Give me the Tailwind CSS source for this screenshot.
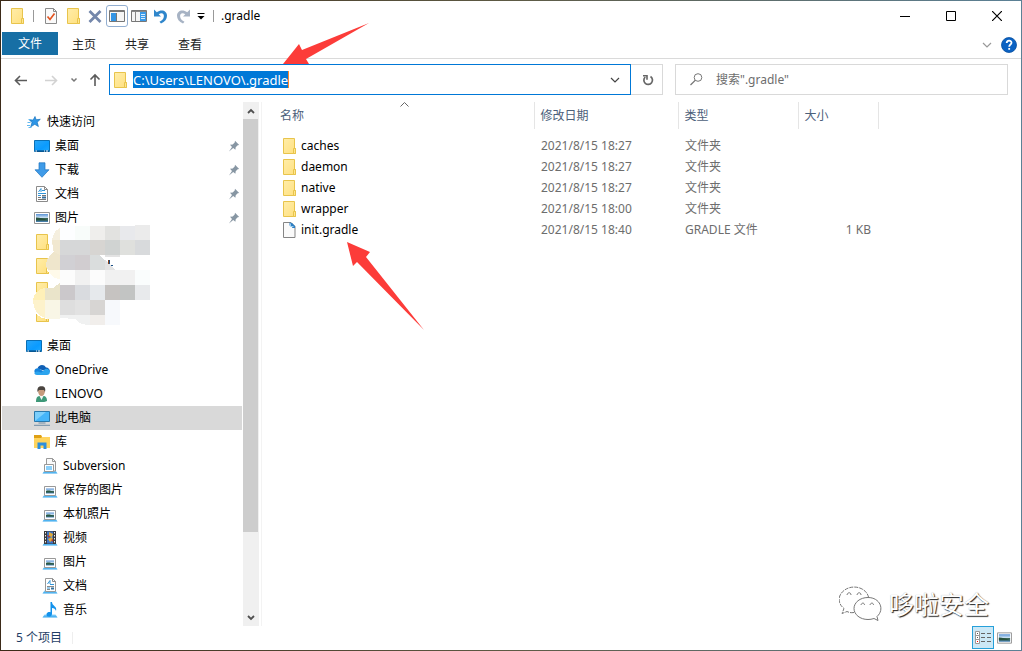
<!DOCTYPE html>
<html lang="zh-CN">
<head>
<meta charset="utf-8">
<meta name="viewport" content="width=device-width, initial-scale=1">
<title>.gradle</title>
<script src="https://cdn.jsdelivr.net/npm/@tailwindcss/browser@4"></script>
</head>
<body class="h-screen overflow-hidden bg-linear-to-r from-[#3b2a18] via-[#5d5a44] to-[#5b8196] p-px font-['Noto_Sans','Noto_Sans_CJK_SC',sans-serif] text-[12px] leading-[16px] text-black">
<svg class="absolute size-0" aria-hidden="true">
  <defs>
    <linearGradient id="gFolder" x1="0" y1="0" x2="1" y2="1"><stop offset="0" stop-color="#ffeda9"/><stop offset="1" stop-color="#ffe07f"/></linearGradient>
    <linearGradient id="gBlue" x1="0" y1="0" x2="1" y2="1"><stop offset="0" stop-color="#2aa6f8"/><stop offset=".6" stop-color="#0a9bff"/><stop offset="1" stop-color="#1ea8ff"/></linearGradient>
    <linearGradient id="gPhoto" x1="0" y1="0" x2="0" y2="1"><stop offset="0" stop-color="#5a93d6"/><stop offset=".5" stop-color="#d6e9f5"/><stop offset=".55" stop-color="#3c6653"/><stop offset="1" stop-color="#4a83b8"/></linearGradient>
    <linearGradient id="gStand" x1="0" y1="0" x2="0" y2="1"><stop offset="0" stop-color="#8fd3fb"/><stop offset="1" stop-color="#2fa4ec"/></linearGradient>
    <symbol id="folder" viewBox="0 0 16 16"><path d="M2.500.5h11v10h1v5h-12z" fill="url(#gFolder)" stroke="#e8c44c"/><path d="M12.500 15v-4.500h2v5h-2z" fill="#ffe68f" stroke="#e8c44c"/></symbol>
    <symbol id="star" viewBox="0 0 16 16"><path d="M9 2.500l1.100 3.200 4.200-.4-3.100 2.900 1.200 4.300-3.600-2.200-4.100 2.500 1.300-4.300-2.400-2.500 3.600 0z" fill="#2e95e6" stroke="#1673bd" stroke-width=".7"/><path d="M2.500 5.500h3M1.500 8.500h3M1 11.500h3M2.500 13.500h3" stroke="#62b8ef"/></symbol>
    <symbol id="desktop" viewBox="0 0 16 16"><path d="M.5 2.500h15v11H.5z" fill="url(#gBlue)" stroke="#0a6fb5"/><path d="M1 13h14" stroke="#073e6c"/><path d="M1.500 13h1.500M10 13h1M12 13h2" stroke="#fff"/></symbol>
    <symbol id="download" viewBox="0 0 16 16"><path d="M5 .8h6v7h4L8 15.300 1 7.800h4z" fill="#3f9be8" stroke="#1c72bf" stroke-width=".7"/></symbol>
    <symbol id="doc" viewBox="0 0 16 16"><path d="M2.500.5h8l3 3v12h-11z" fill="#fff" stroke="#8b8b8b"/><path d="M10.500.5v3h3" fill="none" stroke="#8b8b8b"/><path d="M4.500 6L7 2.500V6M8 4.500h3M4 7.500h8M4 9.500h3" stroke="#3295d8" fill="none"/><path d="M8 9.500h4M4 11.500h3M4 13.500h8" stroke="#777"/><path d="M8 10.500h4v2H8z" fill="#356d9b"/></symbol>
    <symbol id="picture" viewBox="0 0 16 16"><path d="M.5 2.500h15v11H.5z" fill="#fff" stroke="#949494"/><path d="M2 4h12v8H2z" fill="url(#gPhoto)"/><path d="M2 7.500c4 0 7 1 12 2.500v.5H2z" fill="#28523e"/></symbol>
    <symbol id="cloud" viewBox="0 0 16 16"><path d="M3.500 6.500C4.500 2.500 10 1.500 12 5.500 15 5.500 16 8 15.800 10L8 8z" fill="#0f5fb5"/><path d="M1 11C-1 8 2 5.500 5 6.500l8 5z" fill="#1683dc"/><path d="M5 12.700l5-4.500c2-3 6-1 5.900 1.800C16 12 14.500 13 13 13H3c-1.500 0-2.500-1-2.700-2C2 8.500 6 9 9 12z" fill="#2ba4ee"/></symbol>
    <symbol id="user" viewBox="0 0 16 16"><path d="M2 16c0-4 1-6 4-6h3c3 0 4 2 4 5-2 1.500-8 1.500-11 1z" fill="#3e9878"/><path d="M5.500 10h4l-2 4z" fill="#f4f6f3"/><path d="M4 4h7c0 4-1.500 6-3.500 6S4 8 4 4z" fill="#c69a7c"/><path d="M3.500 6C3 2 4.500.3 7.500.3S12 2 11 6l-1-2H5z" fill="#4b4540"/></symbol>
    <symbol id="pc" viewBox="0 0 16 16"><path d="M.5 1.500h15v10H.5z" fill="#45b5fa" stroke="#2a79ac"/><path d="M1 11V2h11z" fill="#7ccffc"/><path d="M4.500 13h7M0 15.300h16" stroke="#6e8ca5"/></symbol>
    <symbol id="library" viewBox="0 0 16 16"><path d="M0 1h7l1 2h8v11H0z" fill="#ffd45e"/><path d="M0 1h7l1 2-1 1H0z" fill="#dfa014"/><path d="M3.500 15V8.500h9V15h-3v-3.500h-3V15z" fill="#2d8fdd"/></symbol>
    <symbol id="stand" viewBox="0 0 16 16"><path d="M2.500 12.500h11l2 3H.5z" fill="url(#gStand)"/></symbol>
    <symbol id="libsub" viewBox="0 0 16 16"><use href="#stand"/><path d="M4.500 7V.5h6l3 3V13h-9V7z" fill="#fafafa" stroke="#999"/><path d="M10.500.5v3h3" fill="none" stroke="#999"/><path d="M2.500 6.500h9v7h-9z" fill="#fff" stroke="#999"/><path d="M4 8h6v4H4z" fill="#8bd0fa"/></symbol>
    <symbol id="libpic" viewBox="0 0 16 16"><use href="#stand"/><path d="M2.500 4.500h11v9h-11z" fill="#fff" stroke="#999"/><path d="M4 6.500h8v5H4z" fill="url(#gPhoto)"/><path d="M4 9c3-1 5 0 8 1v.5H4z" fill="#2a5946"/></symbol>
    <symbol id="libvideo" viewBox="0 0 16 16"><use href="#stand"/><path d="M2 1h12v13H2z" fill="#3b3b3d"/><path d="M5 1.500h6v12H5z" fill="#3e75c6"/><path d="M3.500 2v12M12.500 2v12" stroke="#eee" stroke-dasharray="1.500 1.500"/><path d="M7 2l4 2-1 3-3-1zM6 9l4-2 1 3-3 2z" fill="#e2aa36"/><path d="M5 5l3 1-1 2zM9 10l2-1v3z" fill="#be3729"/></symbol>
    <symbol id="libdoc" viewBox="0 0 16 16"><use href="#stand"/><path d="M3.500.5h7l3 3v10h-10z" fill="#fff" stroke="#999"/><path d="M10.500.5v3h3M5 8.500h7M5 11.500h3" fill="none" stroke="#888"/><path d="M5.500 6L8 2.500V6M8 6.500h4M5 10h3" stroke="#3295d8" fill="none"/><path d="M9 9.500h3v2H9z" fill="#34709c"/></symbol>
    <symbol id="libmusic" viewBox="0 0 16 16"><use href="#stand"/><path d="M8.500 0H10c0 4 5.500 4 4 9-.5-2-2-3-4-3v6c0 2-2 3-4 2.500S4 11 6 10.200c1-.4 2-.2 2.500.1z" fill="#1292ec"/></symbol>
    <symbol id="pin" viewBox="0 0 12 12"><path d="M7 .8L11.200 5l-1.500.3-2 2-.3 2.500L5.200 8 1 11.500 4 7 2 4.700l2.700-.3 2-2z" fill="#8796a3"/></symbol>
    <symbol id="file" viewBox="0 0 16 16"><path d="M2.500.5H10l4 4v11H2.500z" fill="#fafafa" stroke="#858585"/><path d="M8.500.5v3l2 1 1 1.500h2.500V4L11 1z" fill="#2d7fc4"/><path d="M9.500 1.500v3h3" fill="none" stroke="#9bccee"/></symbol>
  </defs>
</svg>

<main class="relative flex h-full flex-col bg-white">
  <header class="flex h-[31px] shrink-0 items-center pr-px pb-px pl-2">
    <svg class="size-4"><use href="#folder"/></svg>
    <span class="ml-2 h-3 w-px bg-[#999]"></span>
    <button aria-label="属性" class="ml-[9px]"><svg class="size-4" viewBox="0 0 16 16"><path d="M2.500.5h8l3 3v12h-11z" fill="#fafafa" stroke="#8b8b8b"/><path d="M10.500.5v3h3" fill="none" stroke="#8b8b8b"/><path d="M4.500 8.500l2.500 3 4.500-6" fill="none" stroke="#e35420" stroke-width="1.700"/></svg></button>
    <button aria-label="新建文件夹" class="ml-[6px]"><svg class="size-4"><use href="#folder"/></svg></button>
    <button aria-label="删除" class="ml-[6px]"><svg class="size-4" viewBox="0 0 16 16"><path d="M2.500 3l11 11M13.500 3l-11 11" stroke="#7487ab" stroke-width="2.800"/></svg></button>
    <button aria-label="导航窗格" class="ml-[3px] flex h-[22px] w-[22px] items-center justify-center rounded-[3px] border border-[#92aed0]"><svg class="h-3 w-4 shrink-0" viewBox="0 0 16 12"><path d="M.5.5h15v11H.5z" fill="#f5f5f5" stroke="#777"/><path d="M1 1.500h14" stroke="#777"/><path d="M2 3h5v8H2z" fill="#3294e4"/><path d="M7.500 3v8" stroke="#777"/></svg></button>
    <button aria-label="详细信息窗格" class="ml-[3px]"><svg class="h-3 w-4" viewBox="0 0 16 12"><path d="M.5.5h15v11H.5z" fill="#f5f5f5" stroke="#777"/><path d="M1 1.500h14M4.500 2v9" stroke="#888"/><path d="M9 2h6v9H9z" fill="#3a9ae8"/><path d="M10 4.500h4M10 6.500h4M10 8.500h4" stroke="#d4ecff"/></svg></button>
    <button aria-label="撤消" class="ml-[6px]"><svg class="size-4" viewBox="0 0 16 16"><path d="M1 1.500v7h7L5.700 6.200C9 4 11.500 6 10.800 9c-.4 2-1.800 3.500-4.300 4.700l1.500 1.800c4-1.700 6-4.500 6-7.800 0-5-5.500-7-10.200-3.500z" fill="#2f86cb"/></svg></button>
    <button aria-label="恢复" class="ml-[6px]"><svg class="size-4" viewBox="0 0 16 16"><path d="M15 1.500v7H8l2.300-2.300C7 4 4.500 6 5.200 9c.4 2 1.800 3.500 4.300 4.700L8 15.500C4 13.800 2 11 2 7.700c0-5 5.500-7 10.200-3.500z" fill="#a7b3c4"/></svg></button>
    <button aria-label="自定义快速访问工具栏" class="ml-[6px]"><svg class="h-2 w-2" viewBox="0 0 8 8"><path d="M.5 1.500h7" stroke="#000"/><path d="M.5 4h7L4 7.500z"/></svg></button>
    <span class="ml-2 h-3 w-px bg-[#999]"></span>
    <h1 class="ml-[7px] flex-1">.gradle</h1>
    <button aria-label="最小化" class="flex h-full w-[46px] items-center justify-center"><svg class="size-[10px]" viewBox="0 0 10 10"><path d="M0 5.500h10" stroke="#000"/></svg></button>
    <button aria-label="最大化" class="flex h-full w-[46px] items-center justify-center"><svg class="size-[10px]" viewBox="0 0 10 10"><path d="M.5.5h9v9h-9z" fill="none" stroke="#000"/></svg></button>
    <button aria-label="关闭" class="flex h-full w-[46px] items-center justify-center"><svg class="size-[10px]" viewBox="0 0 10 10"><path d="M0 0l10 10M10 0L0 10" stroke="#000" stroke-width="1.200"/></svg></button>
  </header>

  <nav class="flex h-[27px] shrink-0 border-b border-[#dadada] pl-px text-[#222]">
    <button class="h-[23px] w-14 bg-[#176fa5] text-white">文件</button>
    <button class="h-[25px] w-[52px]">主页</button>
    <button class="h-[25px] w-[54px]">共享</button>
    <button class="h-[25px] w-[52px]">查看</button>
    <span class="flex-1"></span>
    <button aria-label="展开功能区" class="mr-[9px]"><svg class="h-3 w-[10px]" viewBox="0 0 10 12"><path d="M1 4l4 4 4-4" fill="none" stroke="#999" stroke-width="1.200"/></svg></button>
    <button aria-label="帮助" class="mr-1"><svg class="size-4" viewBox="0 0 16 16"><circle cx="8" cy="8" r="7.500" fill="#0b62c3" stroke="#084f9f" stroke-width=".8"/><path d="M5.700 6.100c0-3.200 4.800-3.100 4.800-.4 0 1.800-2.300 1.900-2.300 4M8.200 11v1.800" fill="none" stroke="#fff" stroke-width="1.800"/></svg></button>
  </nav>

  <div class="flex h-[42px] shrink-0 items-center pr-[13px] pb-px pl-3">
    <button aria-label="返回"><svg class="size-4" viewBox="0 0 16 16"><path d="M14 8.500H2.500M7 4L2.500 8.500 7 13" fill="none" stroke="#5b5b5b" stroke-width="1.600"/></svg></button>
    <button aria-label="前进" class="ml-[14px]"><svg class="size-4" viewBox="0 0 16 16"><path d="M2 8.500h11.500M9 4l4.500 4.500L9 13" fill="none" stroke="#d2d2d2" stroke-width="1.600"/></svg></button>
    <button aria-label="最近浏览的位置" class="ml-[11px]"><svg class="h-4 w-2" viewBox="0 0 8 16"><path d="M1.500 6.500L4 9l2.500-2.500" fill="none" stroke="#777" stroke-width="1.500"/></svg></button>
    <button aria-label="上移" class="ml-[9px]"><svg class="size-4" viewBox="0 0 16 16"><path d="M8 14V3M3.500 7.500L8 3l4.500 4.500" fill="none" stroke="#5b5b5b" stroke-width="1.600"/></svg></button>
    <div class="ml-[6px] flex h-[31px] min-w-0 flex-1 items-center border border-[#0078d7] pl-[2px]">
      <svg class="size-4 shrink-0"><use href="#folder"/></svg>
      <input aria-label="地址" value="C:\Users\LENOVO\.gradle" class="ml-[5px] field-sizing-content h-[17px] border-r border-[#ff8728] bg-[#0078d7] text-[13px] text-white outline-none">
      <span class="flex-1"></span>
      <button aria-label="以前的位置" class="px-[10px]"><svg class="h-3 w-[10px]" viewBox="0 0 10 12"><path d="M1 4l4 4 4-4" fill="none" stroke="#444" stroke-width="1.200"/></svg></button>
    </div>
    <button aria-label="刷新" class="flex h-[31px] w-8 items-center justify-center border border-l-0 border-[#d9d9d9] pl-[2px]"><svg class="size-3" viewBox="0 0 12 12"><path d="M3.200 3A4.300 4.300 0 1 0 8.500 2.500" fill="none" stroke="#666" stroke-width="1.700"/><path d="M1 1.700h4v4" fill="none" stroke="#666" stroke-width="1.600"/></svg></button>
    <label class="ml-3 flex h-[31px] w-[333px] items-center border border-[#d9d9d9] pl-[13px]">
      <svg class="size-4 shrink-0" viewBox="0 0 16 16"><circle cx="9" cy="5.500" r="3.800" fill="none" stroke="#777"/><path d="M6.300 8.300L1.500 13" stroke="#777" stroke-width="1.200"/></svg>
      <input aria-label="搜索" placeholder='搜索".gradle"' class="ml-[11px] min-w-0 flex-1 outline-none placeholder:text-[#6d6d6d]">
    </label>
  </div>

  <div class="flex min-h-0 flex-1">
    <aside class="relative flex w-[242px] shrink-0 flex-col pt-[9px] pr-px pl-px">
      <a href="#" class="flex h-6 items-center gap-[5px] pl-6"><svg class="size-4"><use href="#star"/></svg>快速访问</a>
      <a href="#" class="flex h-6 items-center gap-[5px] pr-[2px] pl-8"><svg class="size-4"><use href="#desktop"/></svg><span class="flex-1">桌面</span><svg class="size-3"><use href="#pin"/></svg></a>
      <a href="#" class="flex h-6 items-center gap-[5px] pr-[2px] pl-8"><svg class="size-4"><use href="#download"/></svg><span class="flex-1">下载</span><svg class="size-3"><use href="#pin"/></svg></a>
      <a href="#" class="flex h-6 items-center gap-[5px] pr-[2px] pl-8"><svg class="size-4"><use href="#doc"/></svg><span class="flex-1">文档</span><svg class="size-3"><use href="#pin"/></svg></a>
      <a href="#" class="flex h-6 items-center gap-[5px] pr-[2px] pl-8"><svg class="size-4"><use href="#picture"/></svg><span class="flex-1">图片</span><svg class="size-3"><use href="#pin"/></svg></a>
      <a href="#" aria-label="文件夹 1" class="flex h-6 items-center pl-8"><svg class="size-4"><use href="#folder"/></svg></a>
      <a href="#" aria-label="文件夹 2" class="flex h-6 items-center pl-8"><svg class="size-4"><use href="#folder"/></svg></a>
      <a href="#" aria-label="文件夹 3" class="flex h-6 items-center pl-8"><svg class="size-4"><use href="#folder"/></svg></a>
      <a href="#" aria-label="文件夹 4" class="flex h-6 items-center pl-8"><svg class="size-4"><use href="#folder"/></svg></a>
      <!-- Pixelated cover over the private folder names -->
      <svg class="absolute top-[124px] left-[29px] h-[101px] w-[125px]" viewBox="30 225 125 101" shape-rendering="crispEdges">
        <path d="M60 228c-6 2-8 9-8 15l2 8c-5 3-8 9-8 14 1 8 6 13 12 15l-6 7-9 2c-7 3-10 9-10 15 0 8 6 15 14 15h25l5 4h45V228z" fill="#fff"/>
        <path d="M60 228c-6 2-8 9-8 15l2 8h6z" fill="#f5efdf"/><path d="M52 240h8v15h-6z" fill="#f1e8d0"/><path d="M54 252c-5 3-8 9-8 14l2 4h12v-15z" fill="#efe6cc"/><path d="M48 270h12v9c-5 0-10-3-12-9z" fill="#fffaea"/>
        <path d="M45 288c-8 1-12 8-12 12h12z" fill="#fff0b8"/><path d="M33 300h12v18c-8-2-12-10-12-18z" fill="#fdf2cb"/><path d="M45 288h8l7-5v17H45z" fill="#eae4ca"/><path d="M45 300h15v19H48l-3-1z" fill="#f9f6e6"/>
        <path d="M60 228l4-2h11v14H60z" fill="#fdfeff"/><path d="M75 226h15v14H75z" fill="#f8fcfa"/><path d="M90 226h15v14H90z" fill="#efeeec"/><path d="M105 226h15v14h-15z" fill="#e2e2e0"/><path d="M120 226h15v14h-15z" fill="#e8e9ec"/><path d="M135 225h15v15h-15z" fill="#ebebeb"/>
        <path d="M60 240h30v15H60z" fill="#d6d7d8"/><path d="M90 240h15v15H90z" fill="#d7d5d2"/><path d="M105 240h15v15h-15z" fill="#d0d3d2"/><path d="M120 240h15v15h-15z" fill="#dfe0dd"/><path d="M135 240h15v15h-15z" fill="#d8dadc"/>
        <path d="M60 255h15v15H60z" fill="#d1d0d4"/><path d="M75 255h15v15H75z" fill="#d1cdd0"/><path d="M90 255h9l6 5v10H90z" fill="#dadddd"/><path d="M105 260l11 10h-11z" fill="#e3e3e3"/><path d="M105 255h15v2h-15z" fill="#e3e3e3"/>
        <path d="M60 270h15v15H60zM90 270h15v15H90z" fill="#fcfcfc"/><path d="M75 270h15v15H75zM105 270h30v15h-30z" fill="#f1f1f1"/><path d="M135 270h15v15h-15z" fill="#fafdfd"/>
        <path d="M60 285h15v15H60z" fill="#cbc8cb"/><path d="M75 285h15v15H75z" fill="#d9dbdf"/><path d="M90 285h15v15H90z" fill="#e6e9ec"/><path d="M105 285h15v15h-15z" fill="#c6c3c1"/><path d="M120 285h15v15h-15z" fill="#c2c4c3"/><path d="M135 285h15v15h-15z" fill="#e8eaec"/>
        <path d="M60 300h15v15H60z" fill="#dedede"/><path d="M75 300h15v15H75z" fill="#e2e2e2"/><path d="M90 300h15v15H90z" fill="#d7d5d3"/><path d="M105 300h15v25h-15z" fill="#f7f9fc"/><path d="M60 315h15v4l-15-1zM75 315h15v10c-6 0-12-2-15-6z" fill="#f0f1f1"/><path d="M90 315h15v10H90z" fill="#f1eeeb"/>
        <path d="M108 260v4" stroke="#8a4218"/><path d="M109 260v4M111 265h2" stroke="#174e87"/>
      </svg>
      <a href="#" class="mt-2 flex h-6 items-center gap-[5px] pl-6"><svg class="size-4"><use href="#desktop"/></svg>桌面</a>
      <a href="#" class="flex h-6 items-center gap-[5px] pl-8"><svg class="size-4"><use href="#cloud"/></svg>OneDrive</a>
      <a href="#" class="flex h-6 items-center gap-[5px] pl-8"><svg class="size-4"><use href="#user"/></svg>LENOVO</a>
      <a href="#" class="flex h-6 items-center gap-[5px] bg-[#d9d9d9] pl-8"><svg class="size-4"><use href="#pc"/></svg>此电脑</a>
      <a href="#" class="flex h-6 items-center gap-[5px] pl-8"><svg class="size-4"><use href="#library"/></svg>库</a>
      <a href="#" class="flex h-6 items-center gap-[5px] pl-10"><svg class="size-4"><use href="#libsub"/></svg>Subversion</a>
      <a href="#" class="flex h-6 items-center gap-[5px] pl-10"><svg class="size-4"><use href="#libpic"/></svg>保存的图片</a>
      <a href="#" class="flex h-6 items-center gap-[5px] pl-10"><svg class="size-4"><use href="#libpic"/></svg>本机照片</a>
      <a href="#" class="flex h-6 items-center gap-[5px] pl-10"><svg class="size-4"><use href="#libvideo"/></svg>视频</a>
      <a href="#" class="flex h-6 items-center gap-[5px] pl-10"><svg class="size-4"><use href="#libpic"/></svg>图片</a>
      <a href="#" class="flex h-6 items-center gap-[5px] pl-10"><svg class="size-4"><use href="#libdoc"/></svg>文档</a>
      <a href="#" class="flex h-6 items-center gap-[5px] pl-10"><svg class="size-4"><use href="#libmusic"/></svg>音乐</a>
    </aside>
    <div class="mt-px flex w-4 shrink-0 flex-col bg-[#f0f0f0]">
      <button aria-label="向上滚动" class="flex h-[17px] shrink-0 items-center justify-center"><svg class="size-2" viewBox="0 0 8 8"><path d="M1 6l3-3 3 3" fill="none" stroke="#505050" stroke-width="1.800"/></svg></button>
      <div class="mr-px h-[413px] bg-[#cdcdcd]"></div>
      <span class="flex-1"></span>
      <button aria-label="向下滚动" class="flex h-[17px] shrink-0 items-center justify-center"><svg class="size-2" viewBox="0 0 8 8"><path d="M1 2l3 3 3-3" fill="none" stroke="#505050" stroke-width="1.800"/></svg></button>
    </div>
    <section class="mt-px ml-[2px] min-w-0 flex-1 border-l border-[#f3f3f3]">
      <table class="w-[616px] table-fixed border-collapse text-left text-[#6d6d6d]">
        <colgroup><col class="w-[272px]"><col class="w-[144px]"><col class="w-[120px]"><col class="w-[80px]"></colgroup>
        <thead class="text-[#4c607a]">
          <tr class="h-[27px]">
            <th class="relative border-r border-[#e5e5e5] pl-[18px] font-normal">名称<svg class="absolute top-0 left-[138px] h-[5px] w-[9px]" viewBox="0 0 9 5"><path d="M.5 4.500l4-4 4 4" fill="none" stroke="#666"/></svg></th>
            <th class="border-r border-[#e5e5e5] pl-[6px] font-normal">修改日期</th>
            <th class="border-r border-[#e5e5e5] pl-[6px] font-normal">类型</th>
            <th class="border-r border-[#e5e5e5] pl-[6px] font-normal">大小</th>
          </tr>
        </thead>
        <tbody>
          <tr class="h-[6px]" aria-hidden="true"><td colspan="4"></td></tr>
          <tr class="h-[21px]"><td class="pl-[19px] text-black"><span class="flex items-center gap-1"><svg class="size-4"><use href="#folder"/></svg>caches</span></td><td class="pl-[7px]">2021/8/15 18:27</td><td class="pl-[7px]">文件夹</td><td></td></tr>
          <tr class="h-[21px]"><td class="pl-[19px] text-black"><span class="flex items-center gap-1"><svg class="size-4"><use href="#folder"/></svg>daemon</span></td><td class="pl-[7px]">2021/8/15 18:27</td><td class="pl-[7px]">文件夹</td><td></td></tr>
          <tr class="h-[21px]"><td class="pl-[19px] text-black"><span class="flex items-center gap-1"><svg class="size-4"><use href="#folder"/></svg>native</span></td><td class="pl-[7px]">2021/8/15 18:27</td><td class="pl-[7px]">文件夹</td><td></td></tr>
          <tr class="h-[21px]"><td class="pl-[19px] text-black"><span class="flex items-center gap-1"><svg class="size-4"><use href="#folder"/></svg>wrapper</span></td><td class="pl-[7px]">2021/8/15 18:00</td><td class="pl-[7px]">文件夹</td><td></td></tr>
          <tr class="h-[21px]"><td class="pl-[19px] text-black"><span class="flex items-center gap-1"><svg class="size-4"><use href="#file"/></svg>init.gradle</span></td><td class="pl-[7px]">2021/8/15 18:40</td><td class="pl-[7px]">GRADLE 文件</td><td class="pr-[7px] text-right">1 KB</td></tr>
        </tbody>
      </table>
    </section>
  </div>

  <footer class="flex h-6 shrink-0 items-center pr-[9px] pb-px pl-[15px] text-[#1f3e66]">
    <span>5 个项目</span><span class="ml-[10px] h-3 w-px bg-[#eee]"></span>
    <span class="flex-1"></span>
    <button aria-label="详细信息" class="flex h-[23px] w-[22px] items-center justify-center border border-[#26a0da] bg-[#cce8f6]"><svg class="h-[13px] w-4 shrink-0" viewBox="0 0 16 13"><path d="M.5.5h4v12h-4zM.5 4.500h4M.5 8.500h4" fill="#fff" stroke="#999"/><path d="M6 2.500h4M12 2.500h4M6 6.500h4M12 6.500h4M6 10.500h4M12 10.500h4" stroke="#666"/><path d="M2 2h1v1H2zM2 6h1v1H2z" fill="#555"/><path d="M2 10h1v1H2z" fill="#f00"/></svg></button>
    <button aria-label="大图标" class="ml-[3px]"><svg class="h-4 w-[15px]"><use href="#picture"/></svg></button>
  </footer>

  <!-- Callout arrows -->
  <svg class="pointer-events-none absolute top-[22px] left-[281px] h-[43px] w-[88px]" viewBox="282 23 88 43"><path d="M283 64l16-20 3 6 67-27-63 36 3 5z" fill="#fc3c39"/></svg>
  <svg class="pointer-events-none absolute top-[241px] left-[346px] h-[89px] w-[80px]" viewBox="347 242 80 89"><path d="M347 242l23 10-4 5 58 73-67-68-4 4z" fill="#fc3c39"/></svg>

  <!-- Publisher watermark -->
  <div class="pointer-events-none absolute right-[32px] bottom-[27px] flex items-center gap-[7px]">
    <svg class="h-[38px] w-[43px]" viewBox="0 0 43 38" fill="none" stroke="#777"><path d="M15 27.500c-3 .5-5 0-7-1l-5 2 2-5C-2 18-1 10 5 5.500 13-1 27 2 29.500 12" stroke-dasharray="4 1"/><path d="M29 12.500c-8 0-14 5-14 11s6 11 14 11c2 0 4-.3 6-1l4 2-1-4c8-7 3-19-9-19z"/><path d="M8 10c.5-3 4-3 4 0M18 10c.5-3 4-3 4 0M22 20c.5-2.500 3.500-2.500 3.500 0M31 20c.5-2.500 3.500-2.500 3.500 0"/></svg>
    <span class="text-[25px] leading-[36px] text-white [text-shadow:1px_1px_1px_#222,0px_0px_1px_#aaa]">哆啦安全</span>
  </div>
</main>
</body>
</html>
